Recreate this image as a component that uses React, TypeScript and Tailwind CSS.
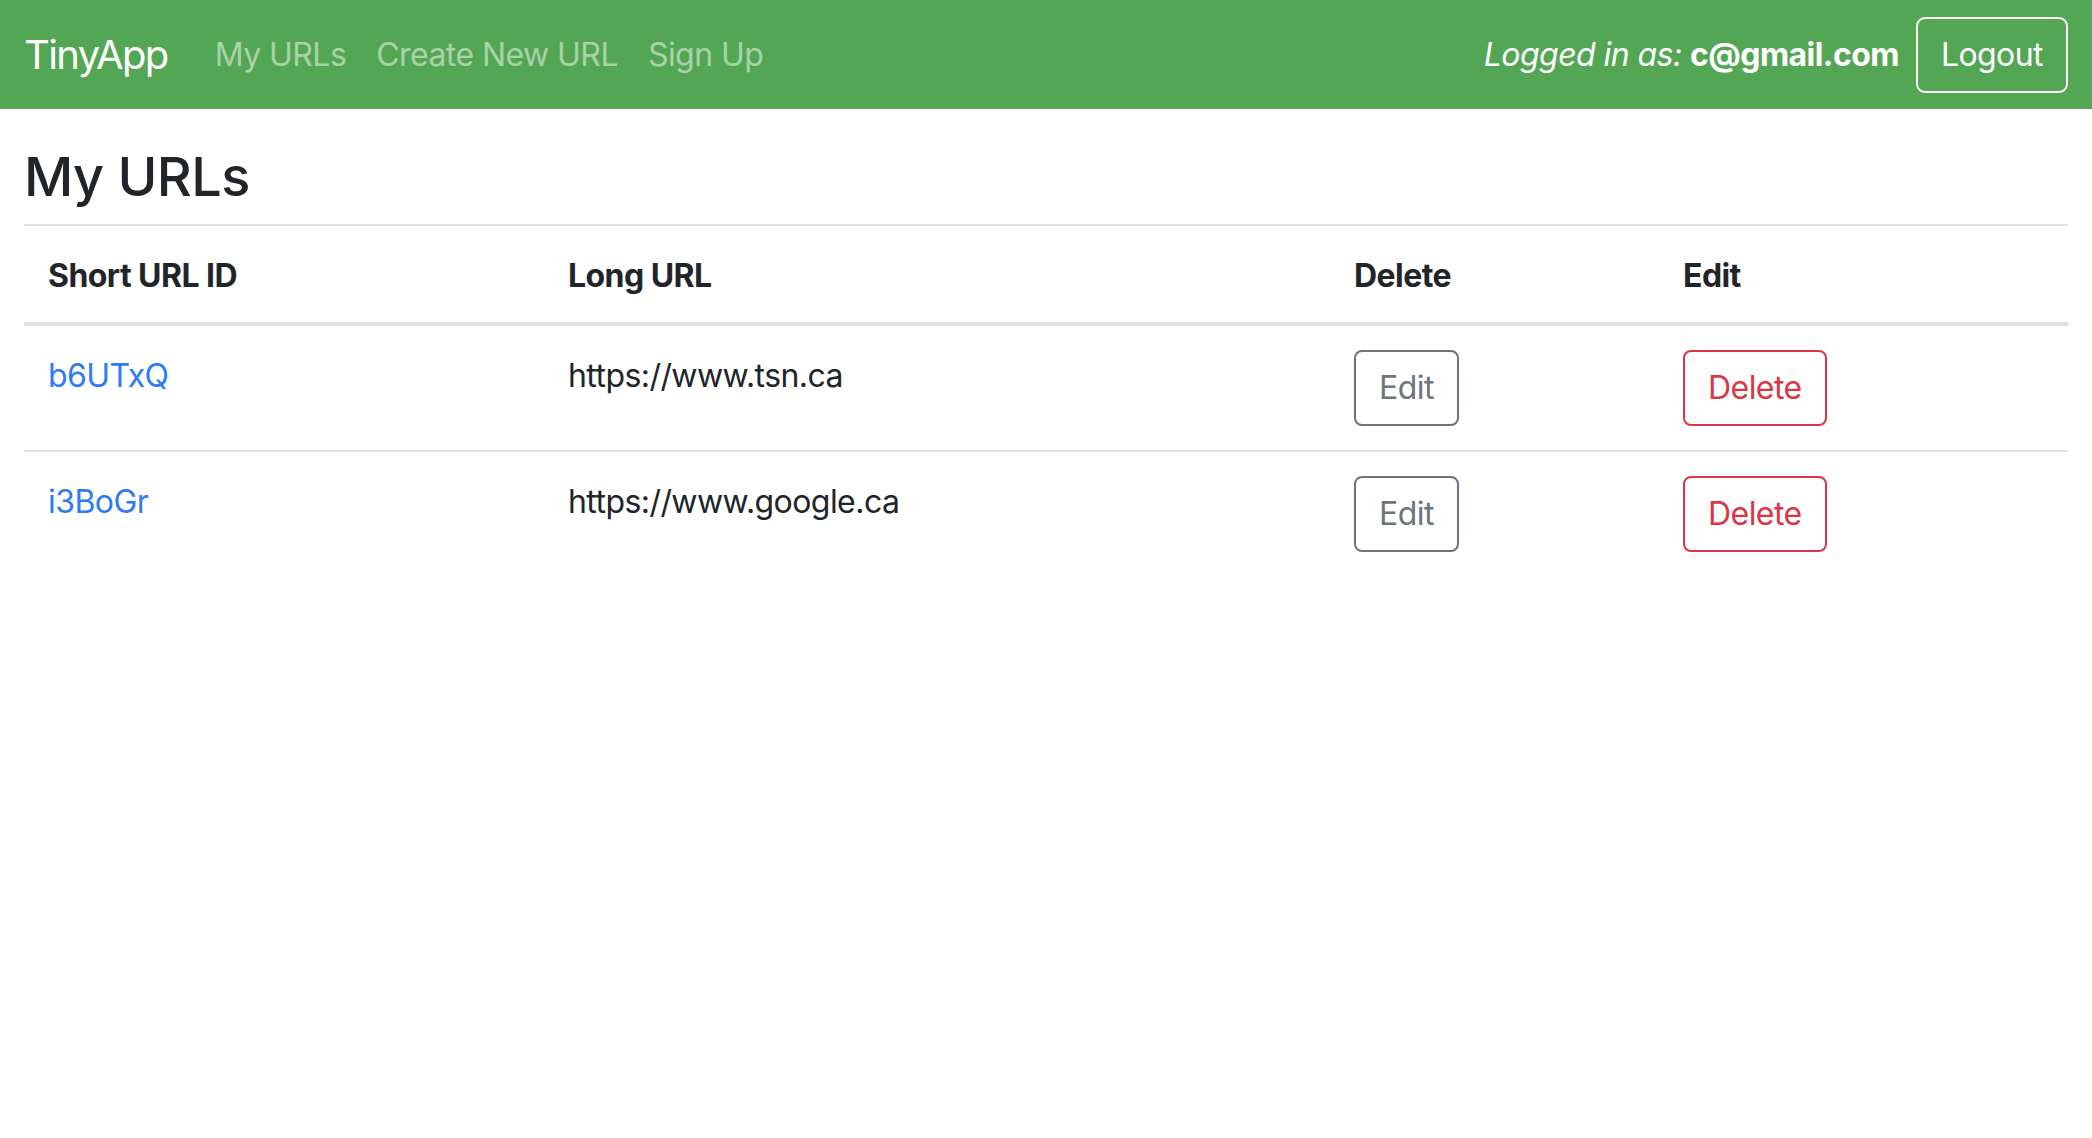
import { useState } from "react";

type Url = {
    id: string;
    longURL: string;
};

const urls: Url[] = [
    { id: "b6UTxQ", longURL: "https://www.tsn.ca" },
    { id: "i3BoGr", longURL: "https://www.google.ca" },
];

const Navbar = ({ email }: { email: string }) => {
    return (
        <nav className="h-[109px] bg-[#53a653] flex items-center justify-between px-[24px]">
            <div className="flex items-center">
                <a href="#" className="text-[40px] leading-[60px] tracking-[-0.04em] text-white mr-[32px]">TinyApp</a>
                <a href="#" className="text-[32px] leading-[48px] px-[15px] text-white/50">My URLs</a>
                <a href="#" className="text-[32px] leading-[48px] px-[15px] text-white/50">Create New URL</a>
                <a href="#" className="text-[32px] leading-[48px] px-[15px] text-white/50">Sign Up</a>
            </div>
            <div className="flex items-center gap-[17px]">
                <span className="text-[32px] leading-[48px] text-white">
                    <i>Logged in as: </i>
                    <b>{email}</b>
                </span>
                <button className="h-[76px] px-[23px] border-2 border-white rounded-[9px] text-[32px] text-white">Logout</button>
            </div>
        </nav>
    );
};

const App = () => {
    const [list] = useState<Url[]>(urls);

    return (
        <div className="min-h-screen bg-white text-[#212529] tracking-[-0.035em]" style={{ fontFamily: "Inter, 'Noto Sans', sans-serif" }}>
            <Navbar email="c@gmail.com" />

            <main className="px-[24px]">
                <h1 className="mt-[36px] mb-[14px] text-[54px] leading-[1.2] font-medium">My URLs</h1>

                <table className="w-full table-fixed border-collapse text-[32px] leading-[48px]">
                    <thead>
                        <tr className="border-t-2 border-b-4 border-[#dee2e6]">
                            <th className="w-[520px] pt-[26px] px-[24px] pb-[22px] text-left font-bold">Short URL ID</th>
                            <th className="w-[786px] pt-[26px] px-[24px] pb-[22px] text-left font-bold">Long URL</th>
                            <th className="w-[329px] pt-[26px] px-[24px] pb-[22px] text-left font-bold">Delete</th>
                            <th className="pt-[26px] px-[24px] pb-[22px] text-left font-bold">Edit</th>
                        </tr>
                    </thead>
                    <tbody>
                        {list.map((url) => (
                            <tr key={url.id} className="border-t-2 border-[#dee2e6] first:border-t-0">
                                <td className="pt-[26px] px-[24px] pb-[22px] align-top">
                                    <a href="#" className="text-[#2f7bf6]">{url.id}</a>
                                </td>
                                <td className="pt-[26px] px-[24px] pb-[22px] align-top">{url.longURL}</td>
                                <td className="p-[24px] align-top">
                                    <button className="h-[76px] px-[23px] border-2 border-[#6c757d] rounded-[8px] text-[#6c757d]">Edit</button>
                                </td>
                                <td className="p-[24px] align-top">
                                    <button className="h-[76px] px-[23px] border-2 border-[#dc3545] rounded-[8px] text-[#dc3545]">Delete</button>
                                </td>
                            </tr>
                        ))}
                    </tbody>
                </table>
            </main>
        </div>
    );
};

export default App;
